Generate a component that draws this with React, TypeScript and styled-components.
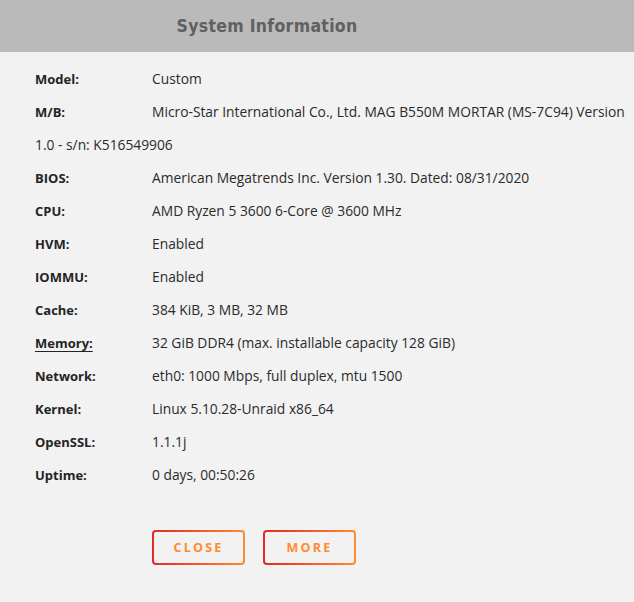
import React from 'react';
import styled, { createGlobalStyle } from 'styled-components';

interface InfoRow {
  label: string;
  value: string;
  underline?: boolean;
}

const rows: InfoRow[] = [
  { label: 'Model:', value: 'Custom' },
  { label: 'M/B:', value: 'Micro-Star International Co., Ltd. MAG B550M MORTAR (MS-7C94) Version 1.0 - s/n: K516549906' },
  { label: 'BIOS:', value: 'American Megatrends Inc. Version 1.30. Dated: 08/31/2020' },
  { label: 'CPU:', value: 'AMD Ryzen 5 3600 6-Core @ 3600 MHz' },
  { label: 'HVM:', value: 'Enabled' },
  { label: 'IOMMU:', value: 'Enabled' },
  { label: 'Cache:', value: '384 KiB, 3 MB, 32 MB' },
  { label: 'Memory:', value: '32 GiB DDR4 (max. installable capacity 128 GiB)', underline: true },
  { label: 'Network:', value: 'eth0: 1000 Mbps, full duplex, mtu 1500' },
  { label: 'Kernel:', value: 'Linux 5.10.28-Unraid x86_64' },
  { label: 'OpenSSL:', value: '1.1.1j' },
  { label: 'Uptime:', value: '0 days, 00:50:26' },
];

const App: React.FC = () => (
  <>
    <GlobalStyle />
    <Dialog>
      <Header>
        <Title>System Information</Title>
      </Header>
      <Body>
        {rows.map((row) => (
          <Row key={row.label}>
            <Label $underline={row.underline}>{row.label}</Label>
            {row.value}
          </Row>
        ))}
        <Buttons>
          <GradientButton>CLOSE</GradientButton>
          <GradientButton>MORE</GradientButton>
        </Buttons>
      </Body>
    </Dialog>
  </>
);

const GlobalStyle = createGlobalStyle`
  html, body {
    margin: 0;
    padding: 0;
    background: #f2f2f2;
  }
`;

const Dialog = styled.div`
  width: 634px;
  min-height: 602px;
  background: #f2f2f2;
  font-family: "Open Sans", sans-serif;
`;

const Header = styled.div`
  height: 52px;
  background: #bababa;
  display: flex;
  align-items: center;
  justify-content: center;
  padding-right: 100px;
`;

const Title = styled.h2`
  margin: 0;
  font-family: "DejaVu Sans Condensed", "DejaVu Sans", sans-serif;
  font-size: 17.5px;
  font-weight: bold;
  letter-spacing: 0.3px;
  color: #606060;
`;

const Body = styled.div`
  padding: 10px 0 0 35px;
`;

const Row = styled.div`
  font-size: 13.8px;
  line-height: 33px;
  color: #2b2b2b;
`;

const Label = styled.span<{ $underline?: boolean }>`
  display: inline-block;
  width: 117px;
  font-size: 13px;
  line-height: 1;
  font-weight: bold;
  color: #242424;
  text-decoration: ${({ $underline }) => ($underline ? 'underline' : 'none')};
  text-underline-offset: 3px;
`;

const Buttons = styled.div`
  display: flex;
  gap: 18px;
  margin: 39px 0 0 117px;
`;

const GradientButton = styled.button`
  width: 93px;
  height: 35px;
  padding: 0;
  border: 2px solid transparent;
  border-radius: 4px;
  background:
    linear-gradient(#f2f2f2, #f2f2f2) padding-box,
    linear-gradient(90deg, #e22828, #ff8b2f) border-box;
  color: #ff8b2f;
  font-family: "Open Sans", sans-serif;
  font-size: 12.5px;
  font-weight: bold;
  letter-spacing: 2.2px;
  cursor: pointer;
`;

export default App;
